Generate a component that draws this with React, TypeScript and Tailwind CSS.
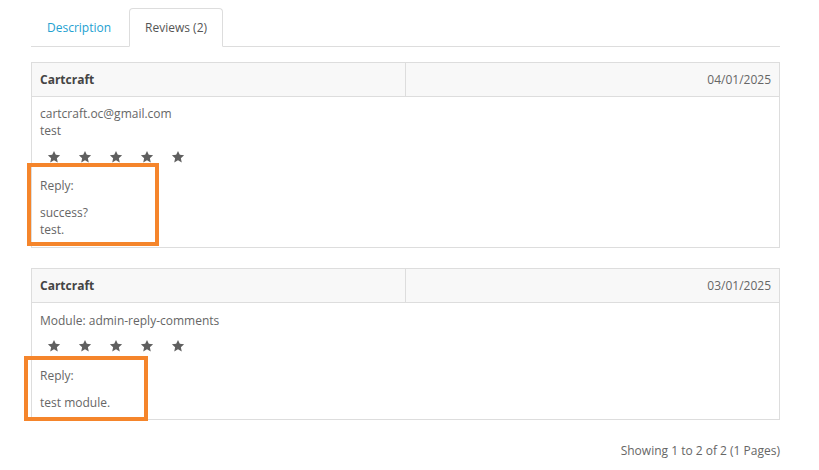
import React from "react";

type Review = {
    author: string;
    date: string;
    lines: string[];
    rating: number;
    reply: string[];
    box: string;
};

const reviews: Review[] = [
    {
        author: "Cartcraft",
        date: "04/01/2025",
        lines: ["cartcraft.oc@gmail.com", "test"],
        rating: 5,
        reply: ["success?", "test."],
        box: "left-[-5px] top-[66px] w-[132px] h-[83px]",
    },
    {
        author: "Cartcraft",
        date: "03/01/2025",
        lines: ["Module: admin-reply-comments"],
        rating: 5,
        reply: ["test module."],
        box: "left-[-8px] top-[53px] w-[124px] h-[65px]",
    },
];

const Star: React.FC = () => (
    <span className="inline-flex w-[28px] h-[28px] items-center justify-center mr-[3px]">
        <svg width="14" height="14" viewBox="0 0 24 24">
            <polygon
                points="12,1.5 15.1,8.3 22.5,9.1 16.9,14.1 18.5,21.5 12,17.7 5.5,21.5 7.1,14.1 1.5,9.1 8.9,8.3"
                fill="#5f5f5f"
            />
        </svg>
    </span>
);

const ReviewTable: React.FC<{ review: Review; last?: boolean }> = ({ review, last }) => {
    const multi = review.lines.length > 1;
    return (
        <table className={`w-full border-collapse border border-[#ddd] ${last ? "mb-[22px]" : "mb-[20px]"}`}>
            <tbody>
                <tr className="bg-[#f8f8f8]">
                    <td className="w-1/2 border border-[#ddd] px-2 py-2 leading-[17px] font-bold text-[#444]">
                        {review.author}
                    </td>
                    <td className="w-1/2 border border-[#ddd] px-2 py-2 leading-[17px] text-right">
                        {review.date}
                    </td>
                </tr>
                <tr>
                    <td
                        colSpan={2}
                        className={`relative border border-[#ddd] px-2 leading-[17px] align-top ${
                            multi ? "pt-2 pb-[9px]" : "pt-[9px] pb-[8px]"
                        }`}
                    >
                        {review.lines.map((l) => (
                            <div key={l}>{l}</div>
                        ))}
                        <div className={`flex ${multi ? "mt-[4px]" : "mt-[3px]"}`}>
                            {Array.from({ length: review.rating }).map((_, i) => (
                                <Star key={i} />
                            ))}
                        </div>
                        <div className={multi ? "mt-[6px]" : "mt-[7px]"}>Reply:</div>
                        <div className="mt-[10px]">
                            {review.reply.map((r) => (
                                <div key={r}>{r}</div>
                            ))}
                        </div>
                        {/* highlight box */}
                        <div className={`absolute border-[4px] border-[#f5852b] ${review.box}`} />
                    </td>
                </tr>
            </tbody>
        </table>
    );
};

const App: React.FC = () => {
    return (
        <div
            className="w-[819px] h-[470px] bg-white text-[12px] text-[#666] pl-[31px] pr-[39px] pt-[8px]"
            style={{ fontFamily: '"Open Sans", "Liberation Sans", sans-serif' }}
        >
            <ul className="flex border-b border-[#ddd] mb-[15px]">
                <li className="mr-[2px]">
                    <a className="block px-[15px] h-[38px] leading-[38px] text-[#23a1d1] border border-transparent">
                        Description
                    </a>
                </li>
                <li className="-mb-px">
                    <a className="block px-[15px] h-[39px] leading-[38px] text-[#555] bg-white border border-[#ddd] border-b-white rounded-t-[4px]">
                        Reviews (2)
                    </a>
                </li>
            </ul>

            {reviews.map((r, i) => (
                <ReviewTable key={i} review={r} last={i === reviews.length - 1} />
            ))}

            <div className="text-right leading-[17px]">Showing 1 to 2 of 2 (1 Pages)</div>
        </div>
    );
};

export default App;
